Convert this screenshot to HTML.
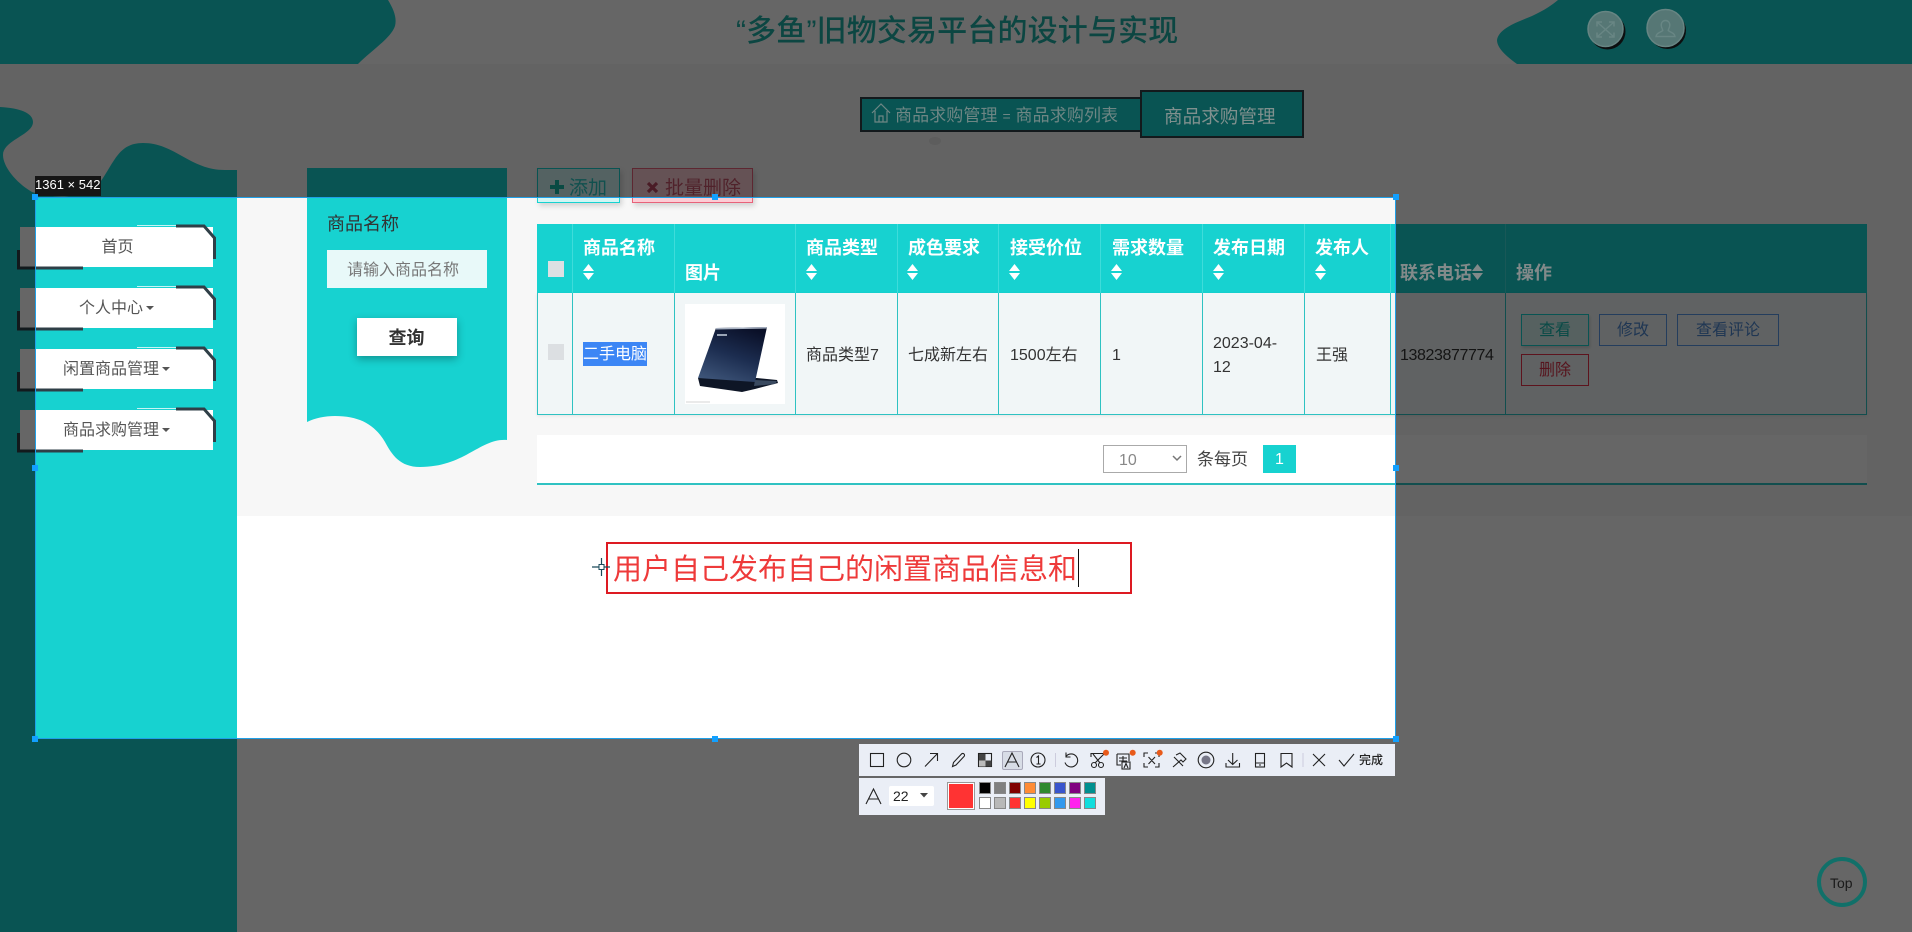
<!DOCTYPE html>
<html lang="zh"><head><meta charset="utf-8"><title>商品求购管理</title>
<style>
html,body{margin:0;padding:0;width:1912px;height:932px;overflow:hidden;background:#fff}
body{position:relative;font-family:"Liberation Sans","Noto Sans CJK SC",sans-serif;color:#333;font-size:16px}
.a,.t,.b{position:absolute}
.t{white-space:nowrap;line-height:24px;height:24px}
.th{font-weight:700;font-size:18px;color:#fff}
.ov{position:absolute;background:rgba(0,0,0,.6)}
.h{position:absolute;width:6px;height:6px;background:#12a0ff;z-index:30}
.b{box-sizing:border-box;text-align:center;white-space:nowrap}
.z{z-index:25}
.m{position:absolute;left:20px;width:193px;height:40px;background:#fff;text-align:center;line-height:42px;color:#555;font-size:16px}
.car{display:inline-block;width:0;height:0;border:4px solid transparent;border-top:4px solid #555;border-bottom:0;margin-left:3px;vertical-align:middle;position:relative;top:-1px}
.v{position:absolute;width:1px;top:293px;height:122px;background:#2fc2c2}
.vh{position:absolute;width:1px;top:224px;height:69px;background:#3fdcda}
.sw{position:absolute;width:12px;height:12px;box-sizing:border-box;border:1px solid #888}
</style></head><body>
<!-- page layer -->
<div class="a" style="left:0;top:0;width:1912px;height:64px;background:#fff"></div>
<div class="a" style="left:0;top:64px;width:1912px;height:452px;background:#f7f7f7"></div>
<svg class="a" style="left:0;top:0" width="1912" height="932" viewBox="0 0 1912 932">
<path d="M0 0H388C394 10 397 18 395 26C391 38 372 50 358 64H0Z" fill="#17d2d0"/>
<path d="M1558 0H1912V64H1517C1506 56 1497 48 1497 40C1499 28 1518 22 1532 16C1545 10 1552 5 1558 0Z" fill="#17d2d0"/>
<path d="M0 107C20 108 33 113 33 122C33 135 3 140 3 155C3 166 15 182 32 192C60 200 90 198 103 178C115 160 120 143 143 143C175 143 190 170 225 170H237V932H0Z" fill="#17d2d0"/>
<path d="M307 168H507V440C480 438 465 467 420 467C400 467 392 455 385 442C375 425 360 416 335 416C325 416 315 418 307 422Z" fill="#17d2d0"/>
<!-- breadcrumb -->
<rect x="861" y="98" width="280" height="33" fill="#17d2d0" stroke="#303f46" stroke-width="2"/>
<rect x="1141" y="91" width="162" height="46" fill="#17d2d0" stroke="#303f46" stroke-width="2"/>
<ellipse cx="935" cy="141" rx="6" ry="4" fill="#e8e8e8"/>
</svg>

<div class="t" style="left:736px;top:14px;height:36px;line-height:36px;font-size:30px;font-weight:500;color:#1fb0a5;letter-spacing:.15px">“多鱼”旧物交易平台的设计与实现</div>
<div class="t z" style="left:895px;top:104px;font-size:17px;color:#6e8684;letter-spacing:.1px">商品求购管理 <span style="font-size:14px">=</span> 商品求购列表</div>
<div class="t z" style="left:1164px;top:105px;font-size:18.600px;color:#80908e">商品求购管理</div>
<div class="t" style="left:1830px;top:871px;font-size:14px;color:#444">Top</div>

<!-- sidebar buttons -->
<div class="m" style="top:227px;text-indent:2px">首页</div>
<div class="m" style="top:288px">个人中心<i class="car"></i></div>
<div class="m" style="top:349px">闲置商品管理<i class="car"></i></div>
<div class="m" style="top:410px">商品求购管理<i class="car"></i></div>
<svg class="a" style="left:0;top:0" width="240" height="480" viewBox="0 0 240 480" fill="none">
<g stroke="#2f3f47" stroke-width="3">
<path d="M18.500 250V268H83"/><path d="M176 226H204L214.500 238V259"/>
<path d="M18.500 311V329H83"/><path d="M176 287H204L214.500 299V320"/>
<path d="M18.500 372V390H83"/><path d="M176 348H204L214.500 360V381"/>
<path d="M18.500 433V451H83"/><path d="M176 409H204L214.500 421V442"/>
</g>
<g stroke="#c8f4f4" stroke-width="1">
<path d="M137 225.500H176M137 286.500H176M137 347.500H176M137 408.500H176"/>
</g></svg>

<!-- filter -->
<div class="t" style="left:327px;top:212px;font-size:18px;color:#333">商品名称</div>
<div class="a" style="left:327px;top:250px;width:160px;height:38px;background:#e8f9f9"></div>
<div class="t" style="left:347px;top:259px;color:#777">请输入商品名称</div>
<div class="b" style="left:357px;top:318px;width:100px;height:38px;background:#fff;box-shadow:0 3px 8px rgba(0,0,0,.3);line-height:40px;font-size:18px;font-weight:700;color:#333;text-indent:-1px">查询</div>

<!-- buttons -->
<div class="b" style="left:537px;top:168px;width:83px;height:35px;border:1px solid #17d2d0;background:#d2f5f4;box-shadow:2px 3px 5px rgba(0,0,0,.15)"></div>
<svg class="a" style="left:550px;top:180px" width="14" height="14"><path d="M5 0H9V5H14V9H9V14H5V9H0V5H5Z" fill="#17b8a8"/></svg>
<div class="t" style="left:569px;top:177px;font-size:19px;color:#2cc8c4">添加</div>
<div class="b" style="left:632px;top:168px;width:121px;height:35px;border:1px solid #e8627a;background:#fccdd5;box-shadow:2px 3px 5px rgba(0,0,0,.15)"></div>
<svg class="a" style="left:646px;top:181px" width="13" height="13"><path d="M2 2L11 11M11 2L2 11" stroke="#b8485f" stroke-width="3.200"/></svg>
<div class="t" style="left:665px;top:177px;font-size:19px;color:#c8566c">批量删除</div>

<!-- table -->
<div class="a" style="left:537px;top:224px;width:1330px;height:69px;background:#17d2d0"></div>
<div class="a" style="left:537px;top:293px;width:1330px;height:122px;background:#f1f6f7;box-sizing:border-box;border:1px solid #2fc2c2;border-top:0;box-shadow:0 1px 3px rgba(0,0,0,.08)"></div>
<div class="vh" style="left:572px"></div><div class="vh" style="left:674px"></div><div class="vh" style="left:795px"></div><div class="vh" style="left:897px"></div><div class="vh" style="left:998px"></div><div class="vh" style="left:1100px"></div><div class="vh" style="left:1202px"></div><div class="vh" style="left:1304px"></div><div class="vh" style="left:1390px"></div><div class="vh" style="left:1505px"></div>
<div class="v" style="left:572px"></div><div class="v" style="left:674px"></div><div class="v" style="left:795px"></div><div class="v" style="left:897px"></div><div class="v" style="left:998px"></div><div class="v" style="left:1100px"></div><div class="v" style="left:1202px"></div><div class="v" style="left:1304px"></div><div class="v" style="left:1390px"></div><div class="v" style="left:1505px"></div>

<div class="a" style="left:548px;top:261px;width:16px;height:16px;background:#dde0e3"></div>
<div class="a" style="left:548px;top:344px;width:16px;height:16px;background:#dcdfe2"></div>

<div class="t th" style="left:583px;top:236px">商品名称</div>
<div class="t th" style="left:685px;top:261px">图片</div>
<div class="t th" style="left:806px;top:236px">商品类型</div>
<div class="t th" style="left:908px;top:236px">成色要求</div>
<div class="t th" style="left:1010px;top:236px">接受价位</div>
<div class="t th" style="left:1112px;top:236px">需求数量</div>
<div class="t th" style="left:1213px;top:236px">发布日期</div>
<div class="t th" style="left:1315px;top:236px">发布人</div>
<div class="t th z" style="left:1400px;top:261px;color:#828a8a">联系电话</div>
<div class="t th z" style="left:1516px;top:261px;color:#828a8a">操作</div>
<svg class="a" style="left:0;top:0" width="1912" height="300" viewBox="0 0 1912 300" fill="#fff">
<path d="M583 271L588.500 264L594 271ZM583 273L588.500 280L594 273Z"/>
<path d="M806 271L811.500 264L817 271ZM806 273L811.500 280L817 273Z"/>
<path d="M907 271L912.500 264L918 271ZM907 273L912.500 280L918 273Z"/>
<path d="M1009 271L1014.500 264L1020 271ZM1009 273L1014.500 280L1020 273Z"/>
<path d="M1111 271L1116.500 264L1122 271ZM1111 273L1116.500 280L1122 273Z"/>
<path d="M1213 271L1218.500 264L1224 271ZM1213 273L1218.500 280L1224 273Z"/>
<path d="M1315 271L1320.500 264L1326 271ZM1315 273L1320.500 280L1326 273Z"/>
</svg>

<div class="a" style="left:583px;top:342px;width:64px;height:24px;background:#3c86f5"></div>
<div class="t" style="left:583px;top:343px;color:#fff">二手电脑</div>
<div class="a" style="left:685px;top:304px;width:100px;height:100px;background:#fff"></div>
<svg class="a" style="left:685px;top:304px" width="100" height="100" viewBox="0 0 100 100">
<defs><linearGradient id="lg" x1="0.7" y1="0" x2="0.25" y2="1"><stop offset="0" stop-color="#0a1028"/><stop offset=".5" stop-color="#1c2d50"/><stop offset="1" stop-color="#3d5478"/></linearGradient></defs>
<path d="M13 74L72 74L92 76L93 79L70 85L57 88L15 82Z" fill="#0e1626"/>
<path d="M70 76L92 77L90 80L69 82Z" fill="#3a4a60"/>
<path d="M31 24L82 23L70 78L13 74Z" fill="url(#lg)"/>
<path d="M31 24L82 23L81.500 24.500L31 25.500Z" fill="#aab4c4"/>
<rect x="32" y="30" width="10" height="2" fill="#9aa5b5"/>
<rect x="1" y="97.500" width="24" height="1" fill="#d4d4d4"/>
</svg>
<div class="t" style="left:806px;top:344px">商品类型7</div>
<div class="t" style="left:908px;top:344px">七成新左右</div>
<div class="t" style="left:1010px;top:344px">1500左右</div>
<div class="t" style="left:1112px;top:344px">1</div>
<div class="t" style="left:1213px;top:332px">2023-04-</div>
<div class="t" style="left:1213px;top:356px">12</div>
<div class="t" style="left:1316px;top:344px">王强</div>
<div class="t" style="left:1400px;top:344px;letter-spacing:-.4px">13823877774</div>

<div class="b" style="left:1521px;top:314px;width:68px;height:32px;line-height:32px;border:1px solid #17d2d0;background:#d6f2f1;color:#18b8b0;box-shadow:1px 2px 3px rgba(0,0,0,.15)">查看</div>
<div class="b" style="left:1599px;top:314px;width:68px;height:32px;line-height:32px;border:1px solid #5a98e8;color:#4f88d0">修改</div>
<div class="b" style="left:1677px;top:314px;width:102px;height:32px;line-height:32px;border:1px solid #5a98e8;color:#4f88d0">查看评论</div>
<div class="b" style="left:1521px;top:354px;width:68px;height:32px;line-height:32px;border:1px solid #e8304a;color:#d8324a">删除</div>

<!-- pagination -->
<div class="a" style="left:537px;top:435px;width:1330px;height:48px;background:#fff;border-bottom:2px solid #2fc2c2"></div>
<div class="a" style="left:1103px;top:445px;width:84px;height:28px;box-sizing:border-box;border:1px solid #aaa;background:#fff"></div>
<div class="t" style="left:1119px;top:449px;color:#888">10</div>
<svg class="a" style="left:1172px;top:455px" width="10" height="8"><path d="M1 1L5 5L9 1" fill="none" stroke="#777" stroke-width="1.500"/></svg>
<div class="t" style="left:1197px;top:448px;font-size:17px;color:#444">条每页</div>
<div class="b" style="left:1263px;top:445px;width:33px;height:28px;line-height:30px;background:#17d2d0;color:#fff">1</div>

<!-- screen-capture overlay -->
<div class="ov" style="left:0;top:0;width:1912px;height:197px"></div>
<div class="ov" style="left:0;top:739px;width:1912px;height:193px"></div>
<div class="ov" style="left:0;top:197px;width:35px;height:542px"></div>
<div class="ov" style="left:1396px;top:197px;width:516px;height:542px"></div>
<div class="a" style="left:35px;top:197px;width:1361px;height:542px;box-sizing:border-box;border:1px solid #1fa0e8"></div>
<div class="t" style="left:35px;top:176px;width:66px;height:20px;line-height:18px;background:#161616;color:#fff;font-size:13px;font-family:'Liberation Sans',sans-serif">1361 × 542</div>
<div class="h" style="left:32px;top:194px"></div><div class="h" style="left:712px;top:194px"></div><div class="h" style="left:1393px;top:194px"></div>
<div class="h" style="left:32px;top:465px"></div><div class="h" style="left:1393px;top:465px"></div>
<div class="h" style="left:32px;top:736px"></div><div class="h" style="left:712px;top:736px"></div><div class="h" style="left:1393px;top:736px"></div>

<!-- text annotation -->
<div class="a" style="left:606px;top:542px;width:526px;height:52px;box-sizing:border-box;border:2px solid #dd1a22"></div>
<div class="t" style="left:613px;top:550px;height:40px;line-height:40px;font-size:29px;color:#ee3a3a">用户自己发布自己的闲置商品信息和</div>
<div class="a" style="left:1078px;top:549px;width:1px;height:38px;background:#111"></div>

<!-- toolbars -->
<div class="a" style="left:859px;top:744px;width:536px;height:32px;background:#eaeef6"></div>
<div class="a" style="left:859px;top:778px;width:246px;height:37px;background:#eaeef6"></div>
<div class="a" style="left:1002px;top:751px;width:21px;height:19px;box-sizing:border-box;background:#d8dde6;border:1px solid #aab;border-radius:2px"></div>
<div class="a" style="left:889px;top:786px;width:45px;height:20px;background:#fff;border-radius:2px"></div>
<div class="t" style="left:893px;top:785px;font-size:14px;height:22px;line-height:22px;color:#222">22</div>
<div class="a" style="left:947px;top:782px;width:28px;height:28px;box-sizing:border-box;border:1px solid #999;background:#ff3333;box-shadow:inset 0 0 0 1px #fff"></div>
<div class="sw" style="left:979px;top:782px;background:#000"></div><div class="sw" style="left:994px;top:782px;background:#808080"></div><div class="sw" style="left:1009px;top:782px;background:#800000"></div><div class="sw" style="left:1024px;top:782px;background:#ff8c36"></div><div class="sw" style="left:1039px;top:782px;background:#2f8a2f"></div><div class="sw" style="left:1054px;top:782px;background:#3a55cc"></div><div class="sw" style="left:1069px;top:782px;background:#800080"></div><div class="sw" style="left:1084px;top:782px;background:#008f8f"></div>
<div class="sw" style="left:979px;top:797px;background:#fff"></div><div class="sw" style="left:994px;top:797px;background:#b8b8b8"></div><div class="sw" style="left:1009px;top:797px;background:#ff3333"></div><div class="sw" style="left:1024px;top:797px;background:#ffff00"></div><div class="sw" style="left:1039px;top:797px;background:#99cc00"></div><div class="sw" style="left:1054px;top:797px;background:#3399ee"></div><div class="sw" style="left:1069px;top:797px;background:#ff22ee"></div><div class="sw" style="left:1084px;top:797px;background:#11dddd"></div>
<div class="t" style="left:1359px;top:748px;font-size:12px;color:#222;font-weight:500">完成</div>
<svg class="a" style="left:0;top:0;z-index:20" width="1912" height="932" viewBox="0 0 1912 932" fill="none">
<path d="M872 113L881 104L890 113M875 111V122H887V111M879 122V116H883V122" stroke="#6e8684" stroke-width="1.200"/>
<circle cx="1607.500" cy="31.500" r="18" fill="#0c0f10"/>
<circle cx="1605.500" cy="29" r="17.500" fill="#567775" stroke="#678583" stroke-width="1.500"/>
<path d="M1597 22L1614 37M1614 22L1597 37M1597 26.500V22H1602M1609 22H1614V26.500M1597 32.500V37H1602M1609 37H1614V32.500" stroke="#688684" stroke-width="1.500"/>
<circle cx="1667.500" cy="30.500" r="18.500" fill="#0c0f10"/>
<circle cx="1665.500" cy="28" r="18.500" fill="#567775" stroke="#678583" stroke-width="1.500"/>
<path d="M1665.500 20.500C1662.500 20.500 1660.800 23 1661.300 26C1661.600 28 1662.800 29.500 1662.800 30.500C1661 32.500 1656.500 32.500 1656 36.500H1675C1674.500 32.500 1670 32.500 1668.200 30.500C1668.200 29.500 1669.400 28 1669.700 26C1670.200 23 1668.500 20.500 1665.500 20.500Z" stroke="#688684" stroke-width="1.400"/>
<circle cx="1842" cy="882" r="23" stroke="#117069" stroke-width="4"/>
<path d="M1477.500 264L1483 271H1472ZM1472 273H1483L1477.500 280Z" fill="#828a8a"/>
<path d="M601.500 558V576M592 567H610" stroke="#1a4a5a" stroke-width="1.200"/><rect x="599" y="564.500" width="5" height="5" fill="#fff" stroke="#1a4a5a"/>
<g stroke="#222" stroke-width="1.100">
<rect x="870.500" y="753.500" width="13" height="13"/>
<circle cx="904" cy="760" r="6.800"/>
<path d="M925 766.500L937.500 753.500M930 753.500H937.500V761"/>
<path d="M952.500 766.500L953.500 762.500L961.500 754A1.600 1.600 0 0 1 964 756.500L956 765Z"/>
<rect x="978.500" y="753.500" width="13" height="13"/>
<path d="M1005 767L1012 753L1019 767M1007.500 762H1016.500"/>
<circle cx="1038" cy="760" r="7"/><path d="M1036.500 757.500L1038.500 756V764M1036.500 764H1040.500"/>
<path d="M1066.200 756.200A6.500 6.500 0 1 1 1065 762.500M1066 752.500V757H1070.500"/>
<path d="M1091 757V753.500H1104M1093 754L1100 763M1104 754L1095 763"/><circle cx="1094" cy="765" r="2.500"/><circle cx="1101" cy="765" r="2.500"/>
<path d="M1117 754H1129V761M1117 754V765H1121M1123 756V762M1119 758H1127M1119 761H1127"/><rect x="1122" y="762" width="8" height="7"/><path d="M1124 768L1126 763.500L1128 768"/>
<path d="M1144 757V753H1148M1155 753H1159V757M1144 763V767H1148M1155 767H1159V763M1148.500 757L1155 764M1155 757L1148.500 764"/>
<path d="M1176 755L1180 753L1186 759L1183 762L1181 760L1173 767M1174 757L1183 766"/>
<circle cx="1206" cy="760" r="7.800"/>
<path d="M1232.700 753V764M1228 760L1232.700 764.500L1237.500 760M1226 763V767H1239.500V763"/>
<rect x="1255.500" y="753.500" width="9" height="13.500"/><path d="M1255.500 763H1264.500M1259 765H1261"/>
<path d="M1281 753.500H1292V767L1286.500 763L1281 767Z"/>
<path d="M1313 754L1325 766M1325 754L1313 766M1339 760L1344 766L1354 754"/>
<path d="M866 804L873.500 789L881 804M869 799H878"/>
</g>
<path d="M1055.500 753V767M1303 753V767" stroke="#ccd"/>
<rect x="979" y="754" width="6.500" height="6.500" fill="#444"/><rect x="985.500" y="760.500" width="6" height="6" fill="#444"/><rect x="979" y="760.500" width="6.500" height="6" fill="#bbb"/>
<circle cx="1206" cy="760" r="4.500" fill="#778"/>
<circle cx="1106" cy="752.700" r="3" fill="#e85a1a"/><circle cx="1132.700" cy="752.700" r="3" fill="#e85a1a"/><circle cx="1159.700" cy="752.700" r="3" fill="#e85a1a"/>
<path d="M920 793H928L924 797.500Z" fill="#444"/>
</svg>
</body></html>
